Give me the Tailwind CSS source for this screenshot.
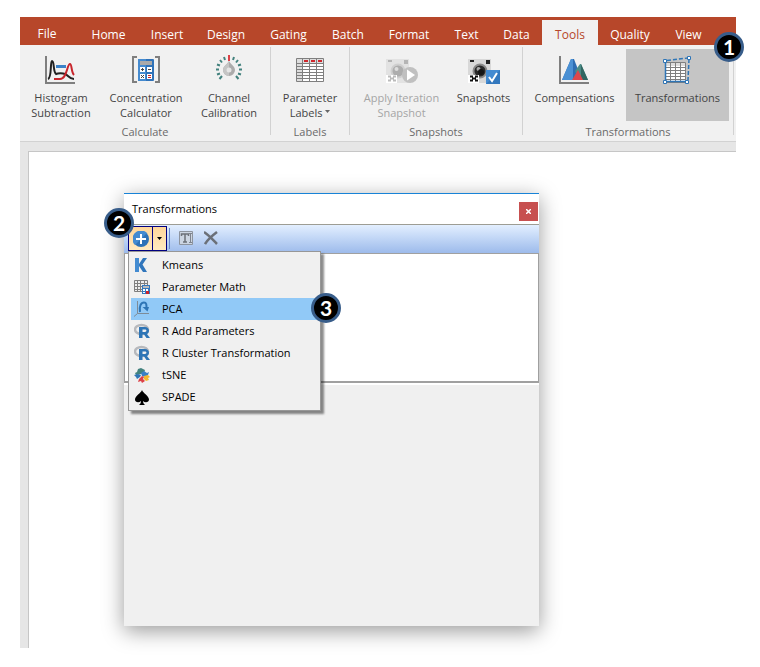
<!DOCTYPE html>
<html lang="en">
<head>
<meta charset="utf-8">
<meta name="viewport" content="width=device-width, initial-scale=1">
<title>Transformations</title>
<script src="https://cdn.jsdelivr.net/npm/@tailwindcss/browser@4"></script>
</head>
<body class="bg-white font-['Open_Sans','Noto_Sans',sans-serif] text-[11px]">
<div class="relative flex min-h-screen flex-col pt-[17px] pr-6 pb-[19px] pl-5">

  <!-- Ribbon tabs -->
  <nav class="flex h-7 bg-[#b7472a] text-xs text-white" aria-label="Ribbon tabs">
    <button class="w-[58px] shrink-0 pt-[7px] pr-1 pb-0.5 leading-[18px]">File</button>
    <button class="w-[61px] shrink-0 pt-[7px] leading-[18px]">Home</button>
    <button class="w-[56px] shrink-0 pt-[7px] leading-[18px]">Insert</button>
    <button class="w-[62px] shrink-0 pt-[7px] leading-[18px]">Design</button>
    <button class="w-[63px] shrink-0 pt-[7px] leading-[18px]">Gating</button>
    <button class="w-[56px] shrink-0 pt-[7px] leading-[18px]">Batch</button>
    <button class="w-[66px] shrink-0 pt-[7px] leading-[18px]">Format</button>
    <button class="w-[49px] shrink-0 pt-[7px] leading-[18px]">Text</button>
    <button class="w-[51px] shrink-0 pt-[7px] leading-[18px]">Data</button>
    <button class="mt-[3px] w-[56px] shrink-0 bg-[#f1f1f1] pt-1 leading-[18px] text-[#b7472a]" aria-current="page">Tools</button>
    <button class="w-[64px] shrink-0 pt-[7px] leading-[18px]">Quality</button>
    <button class="w-[53px] shrink-0 pt-[7px] leading-[18px]">View</button>
  </nav>

  <!-- Ribbon groups -->
  <div class="flex h-[97px] border-b border-[#d2d2d2] bg-[#f1f1f1] pt-0.5 text-[#444444]">
    <section class="flex w-[250px] shrink-0 flex-col pt-0.5">
      <div class="flex h-[75px] leading-[15px]">
        <button class="flex w-[82px] flex-col items-center pt-[5px]">
          <svg class="h-8 w-8" viewBox="0 0 32 32" fill="none"><path d="M1 2v27h29" stroke="#7f7f7f" stroke-width="2"/><path d="M3 25c4-1 2-18 4-18 2.500 0 1 11 4 13 2-1 7-1 9 0 3 1 4 5 9 5" stroke="#222" stroke-width="2"/><path d="M9 25h6c7 0 7-15 10-15 2 0 1 8 4 11" stroke="#c8252c" stroke-width="2"/><path d="M11 12.500h10" stroke="#3b82c9" stroke-width="3"/></svg>
          <span class="mt-1">Histogram<br>Subtraction</span>
        </button>
        <button class="flex w-[88px] flex-col items-center pt-[5px]">
          <svg class="h-8 w-8" viewBox="0 0 32 32" fill="none"><path d="M7 3H3v25h4M25 3h4v25h-4" stroke="#7f7f7f" stroke-width="2"/><rect x="8" y="5" width="16" height="22" rx="1" fill="#2f72b8"/><path d="M8 5h8v22H8z" fill="#458bd0"/><path d="M10 7h12v4H10z" fill="#aaa"/><path d="M10 13h5v5h-5zM17 13h5v5h-5zM10 20h5v5h-5zM17 20h5v5h-5z" fill="#fff"/><path d="M11 15.500h3M12.500 14v3M18 15.500h3M11 21l3 3M14 21l-3 3" stroke="#444"/><path d="M18 21.500h3M18 23.500h3" stroke="#c22"/></svg>
          <span class="mt-1">Concentration<br>Calculator</span>
        </button>
        <button class="flex w-[78px] flex-col items-center pt-[5px]">
          <svg class="h-8 w-8" viewBox="0 0 32 32" fill="none"><g stroke="#43827e" stroke-width="2"><path d="M3 15.500h3M26 15.500h3M4 10.500l3 1M28 10.500l-3 1M7 6l2 2.500M25 6l-2 2.500M11 3l1 3M21 3l-1 3M4 20.500l3-1M28 20.500l-3-1M6.500 25l2.500-3M25.500 25l-2.500-3"/></g><path d="M16 1v6" stroke="#dc4046" stroke-width="2"/><path d="M16 7c2 4 6 5 6 9a6 6 0 0 1-12 0c0-4 4-5 6-9z" fill="#ababab"/><path d="M16 7v15a6 6 0 0 1-6-6c0-4 4-5 6-9z" fill="#c5c5c5"/><circle cx="16" cy="16" r="2.500" fill="#e5e5e5"/></svg>
          <span class="mt-1">Channel<br>Calibration</span>
        </button>
      </div>
      <h2 class="text-center leading-4 text-[#6a6a6a]">Calculate</h2>
    </section>
    <div class="mb-1.5 w-px shrink-0 bg-[#d2d2d2]"></div>
    <section class="flex w-[78px] shrink-0 flex-col pt-0.5">
      <div class="flex h-[75px] justify-center leading-[15px]">
        <button class="flex flex-col items-center pt-[5px]">
          <svg class="h-8 w-8" viewBox="0 0 32 32" fill="none"><path d="M3 4h26v23H3z" fill="#fff"/><path d="M3 4h6v23H3zM3 4h26v5H3z" fill="#ddd"/><path d="M2.500 4.500h27v23h-27zM8.500 4v23M15.500 4v23M22.500 4v23M3 9.500h26M3 12.500h26M3 15.500h26M3 18.500h26M3 21.500h26M3 24.500h26" stroke="#7f7f7f"/><path d="M10 7h4M17 7h4M24 7h4" stroke="#cf272c" stroke-width="2"/></svg>
          <span class="mt-1">Parameter<br>Labels <svg class="inline h-1 w-[5px] align-[3px]" viewBox="0 0 5 4"><path d="M0 0h5L2.500 3z" fill="#666"/></svg></span>
        </button>
      </div>
      <h2 class="text-center leading-4 text-[#6a6a6a]">Labels</h2>
    </section>
    <div class="mb-1.5 w-px shrink-0 bg-[#d2d2d2]"></div>
    <section class="flex w-[172px] shrink-0 flex-col pt-0.5">
      <div class="flex h-[75px] leading-[15px]">
        <button class="flex w-[103px] flex-col items-center pt-[5px] text-[#a5a5a5]" disabled>
          <svg class="h-8 w-8" viewBox="0 0 32 32" fill="none"><path d="M0 5h23v24H0z" fill="#e2e2e2"/><path d="M2 6h4v2H2zM18 6h4v4h-4z" fill="#b5b5b5"/><circle cx="12" cy="17" r="6.500" fill="#adadad" stroke="#cfcfcf" stroke-width="2"/><circle cx="10.500" cy="15" r="2" fill="#ddd"/><path d="M0 21h11v8H0z" fill="#fff"/><path d="M2 22.500h3M7 22.500h3M4 24.500h4M2 26.500h3M7 26.500h3" stroke="#bbb" stroke-width="2"/><circle cx="24" cy="21" r="8" fill="#c0c0c0"/><path d="M21 15.500v11l8-5.500z" fill="#fff"/></svg>
          <span class="mt-1">Apply Iteration<br>Snapshot</span>
        </button>
        <button class="flex w-[61px] flex-col items-center pt-[5px]">
          <svg class="h-8 w-8" viewBox="0 0 32 32" fill="none"><path d="M0 5h23v24H0z" fill="#d8d8d8"/><path d="M2 6h4v2H2zM18 6h4v4h-4z" fill="#222"/><circle cx="12" cy="17" r="6.500" fill="#292929" stroke="#8a8a8a" stroke-width="2"/><circle cx="10.500" cy="15" r="2" fill="#aaa"/><circle cx="13" cy="18" r="3" fill="#151515"/><path d="M0 21h11v8H0z" fill="#fff"/><path d="M2 22.500h3M7 22.500h3M4 24.500h4M2 26.500h3M7 26.500h3" stroke="#111" stroke-width="2"/><path d="M18 16h14v14H18z" fill="#3378be"/><path d="M18 16h14L18 30z" fill="#448bd1"/><path d="m21 23 3 4 5-8" stroke="#fff" stroke-width="2"/></svg>
          <span class="mt-1">Snapshots</span>
        </button>
      </div>
      <h2 class="text-center leading-4 text-[#6a6a6a]">Snapshots</h2>
    </section>
    <div class="mb-1.5 w-px shrink-0 bg-[#d2d2d2]"></div>
    <section class="flex w-[210px] shrink-0 flex-col pt-0.5">
      <div class="flex h-[75px] leading-[15px]">
        <button class="flex w-[103px] flex-col items-center pt-[5px]">
          <svg class="h-8 w-8" viewBox="0 0 32 32" fill="none"><path d="M1 2v27h29" stroke="#7f7f7f" stroke-width="2"/><path d="M3 26 12 5h3l8 21z" fill="#2d6db3"/><path d="M3 26 12 5h2v21z" fill="#4a90d4"/><path d="M16 17l5-7h1l7 16h-9z" fill="#4a8c87"/><path d="M22 10l7 16h-7z" fill="#316762"/><path d="m13 26 6-10 5 10z" fill="#dc474c"/></svg>
          <span class="mt-1">Compensations</span>
        </button>
        <button class="flex h-[72px] w-[103px] flex-col items-center bg-[#c5c5c5] pt-[5px]" aria-pressed="true">
          <svg class="h-8 w-8" viewBox="0 0 32 32" fill="none"><path d="M3 8h21v20H3z" fill="#fff"/><path d="M3 8h21v4H3z" fill="#ddd"/><path d="M3.500 8.500h20v20h-20zM8.500 8v20M13.500 8v20M18.500 8v20M3 13.500h21M3 16.500h21M3 19.500h21M3 22.500h21M3 25.500h21" stroke="#7f7f7f"/><path d="M3.500 8v19.500H24" stroke="#2e75b6" stroke-width="1.500"/><path d="M5 6.500 26 4M27 5 26 26" stroke="#2e75b6" stroke-width="1.500" stroke-dasharray="4 2"/><path d="M1.500 5.500h3v3h-3zM25.500 2.500h3v3h-3zM1.500 26.500h3v3h-3zM23.500 26.500h3v3h-3z" fill="#fff" stroke="#2e75b6"/></svg>
          <span class="mt-1">Transformations</span>
        </button>
      </div>
      <h2 class="text-center leading-4 text-[#6a6a6a]">Transformations</h2>
    </section>
    <div class="mb-1.5 w-px shrink-0 bg-[#d2d2d2]"></div>
  </div>

  <!-- Workspace -->
  <main class="flex flex-1 bg-[#e6e6e6] pt-[9px] pl-2">
    <div class="flex-1 border-t border-l border-[#c6c6c6] bg-white"></div>
  </main>

  <!-- Floating Transformations window -->
  <div class="absolute top-[193px] left-[124px] flex h-[433px] w-[415px] flex-col border-t border-[#1883d7] bg-[#f0f0f0] text-black shadow-[0_5px_20px_rgba(0,0,0,0.4)]" role="dialog" aria-labelledby="window-title">
    <div class="flex h-[30px] items-center justify-between bg-white pr-px pl-2">
      <h1 id="window-title">Transformations</h1>
      <button class="mt-1 flex h-[19px] w-[19px] items-center justify-center bg-[#c75050]" aria-label="Close">
        <svg class="h-[5px] w-[5px]" viewBox="0 0 5 5"><path d="M0 0l5 5M5 0L0 5" stroke="#fff" stroke-width="1.500"/></svg>
      </button>
    </div>
    <div class="flex h-[30px] items-start border-t border-b border-t-[#9d9d94] border-b-[#a0a0a0] bg-linear-to-b from-[#e3efff] to-[#9dbbeb] pt-px pl-1" role="toolbar" aria-label="Transformation tools">
      <button class="flex h-[25px] w-[25px] items-center justify-center border border-[#000080] bg-linear-to-b from-[#ffd69a] to-[#ffeac0]" aria-label="Add">
        <svg class="h-4 w-4" viewBox="0 0 16 16"><circle cx="8" cy="8" r="8" fill="#2d72b8"/><path d="M14 2A8 8 0 1 0 2 14z" fill="#438bd1"/><path d="M8 3v10M3 8h10" stroke="#fff" stroke-width="2"/></svg>
      </button>
      <button class="-ml-px flex h-[25px] w-[15px] items-center justify-center border border-[#000080] bg-linear-to-b from-[#ffd69a] to-[#ffeac0]" aria-label="Choose transformation" aria-expanded="true">
        <svg class="h-[3px] w-[5px]" viewBox="0 0 5 3"><path d="M0 0h5L2.500 3z"/></svg>
      </button>
      <span class="mt-0.5 ml-0.5 h-[21px] w-px bg-[#6a8ccb]"></span>
      <button class="mt-1 ml-2 h-4 w-4" aria-label="Rename" disabled>
        <svg class="h-4 w-4" viewBox="0 0 16 16" fill="none"><path d="M1.500 1.500h13v13h-13z" fill="#ccd5e2" stroke="#8d949f"/><path d="M3.500 6V4h7v2M7 4v8M5 12h4" stroke="#6b7078" stroke-width="1.500"/><path d="M12.500 3v10M11 3.500h3M11 12.500h3" stroke="#7e848e"/></svg>
      </button>
      <button class="mt-1 ml-2.5 h-4 w-4" aria-label="Delete" disabled>
        <svg class="h-4 w-4" viewBox="0 0 16 16" fill="none"><path d="M0 2c5 3 9 8 13 12M13 2C9 5 4 9 1 14" stroke="#6b7078" stroke-width="2.500"/></svg>
      </button>
    </div>
    <div class="h-[129px] border-r border-b-2 border-l border-[#a0a0a0] bg-white"></div>
    <div class="h-0.5 bg-white"></div>
  </div>

  <!-- Transformation menu -->
  <div class="absolute top-[251px] left-[128px] w-[193px] border border-[#979797] bg-[#f0f0f0] p-[2px] text-black shadow-[3px_3px_2px_rgba(0,0,0,0.45)]" role="menu">
    <button role="menuitem" class="flex h-[22px] w-full items-center gap-3 pl-[3px]">
      <svg class="h-4 w-4" viewBox="0 0 16 16"><path d="M1 1h4v14H1z" fill="#438bd1"/><path d="M5 7l4-6h4L8.500 7.500 13 15H9L5 9z" fill="#3076bc"/></svg>Kmeans</button>
    <button role="menuitem" class="flex h-[22px] w-full items-center gap-3 pl-[3px]">
      <svg class="h-4 w-4" viewBox="0 0 16 16" fill="none"><path d="M.5 1.500h13v11H.5zM3.500 1v12M6.500 1v12M10.500 1v12M0 4.500h14M0 7.500h14M0 10.500h14" fill="#eee" stroke="#7f7f7f"/><path d="M8 6h8v9H8z" fill="#3378be"/><path d="M9 7h6v2H9z" fill="#bbb"/><path d="M9 10h2v2H9zM12 10h2v2h-2zM9 13h2v1H9z" fill="#fff"/><path d="M12 12h3v3h-3z" fill="#c8252c"/></svg>Parameter Math</button>
    <button role="menuitem" class="flex h-[22px] w-full items-center gap-3 bg-[#91c9f7] pl-[3px]">
      <svg class="h-4 w-4" viewBox="0 0 16 16" fill="none"><path d="M3.500 0v12.500H15M3.500 12.500 0 15.500" stroke="#7d8b98"/><path d="M6 11C5 5 7 1.500 10 1.500c2.500 0 2.500 2 2.500 6" stroke="#2e75b6" stroke-width="2"/><path d="M8.500 6H15l-1.500 4.500z" fill="#2e75b6"/></svg>PCA</button>
    <button role="menuitem" class="flex h-[22px] w-full items-center gap-3 pl-[3px]">
      <svg class="h-4 w-4" viewBox="0 0 16 16" fill="none"><ellipse cx="7.500" cy="6.500" rx="6.500" ry="4.500" stroke="#b7b9bd" stroke-width="2.500"/><path d="M5 4h6c5 0 5 6 2 7l3 4h-3.500L10 11.500H8.500V15H5zM8.500 6.500V9H11c2 0 2-2.500 0-2.500z" fill="#2e75b6" fill-rule="evenodd"/></svg>R Add Parameters</button>
    <button role="menuitem" class="flex h-[22px] w-full items-center gap-3 pl-[3px]">
      <svg class="h-4 w-4" viewBox="0 0 16 16" fill="none"><ellipse cx="7.500" cy="6.500" rx="6.500" ry="4.500" stroke="#b7b9bd" stroke-width="2.500"/><path d="M5 4h6c5 0 5 6 2 7l3 4h-3.500L10 11.500H8.500V15H5zM8.500 6.500V9H11c2 0 2-2.500 0-2.500z" fill="#2e75b6" fill-rule="evenodd"/></svg>R Cluster Transformation</button>
    <button role="menuitem" class="flex h-[22px] w-full items-center gap-3 pl-[3px]">
      <svg class="h-4 w-4" viewBox="0 0 16 16"><path d="M4 2l3-1 2 1 2 1-1 3-3 1-5 1-1-2 2-1z" fill="#43827e"/><path d="M0 8l4-1 3 1-1 2-3 2-1-2z" fill="#2e75b6"/><path d="M7 6l3-2 3 2 2-1-1 3-3 2-3-1z" fill="#3980c5"/><path d="M10 9l4-1 2 2-2 1 1 2-3 1-2-2z" fill="#f5b82e"/><path d="M5 12l3-3 2 1-1 2 2 2-3 2-1-2-3 1z" fill="#dc4046"/></svg>tSNE</button>
    <button role="menuitem" class="flex h-[22px] w-full items-center gap-3 pl-[3px]">
      <svg class="h-4 w-4" viewBox="0 0 16 16"><path d="M8 1C9 4 15 7 15 10.500c0 3-4 3.500-6 1.500 0 2 1 3 2 4H5c1-1 2-2 2-4-2 2-6 1.500-6-1.500C1 7 7 4 8 1z"/></svg>SPADE</button>
  </div>

  <!-- Step markers -->
  <div class="absolute top-8 left-[714px] flex h-[30px] w-[30px] items-center justify-center rounded-full border-3 border-[#385d8a] bg-black font-['Lato',sans-serif] text-[21px] leading-6 font-bold text-white">1</div>
  <div class="absolute top-[208px] left-[104px] flex h-[30px] w-[30px] items-center justify-center rounded-full border-3 border-[#385d8a] bg-black font-['Lato',sans-serif] text-[21px] leading-6 font-bold text-white">2</div>
  <div class="absolute top-[293px] left-[311px] flex h-[30px] w-[30px] items-center justify-center rounded-full border-3 border-[#385d8a] bg-black font-['Lato',sans-serif] text-[21px] leading-6 font-bold text-white">3</div>
</div>
</body>
</html>
